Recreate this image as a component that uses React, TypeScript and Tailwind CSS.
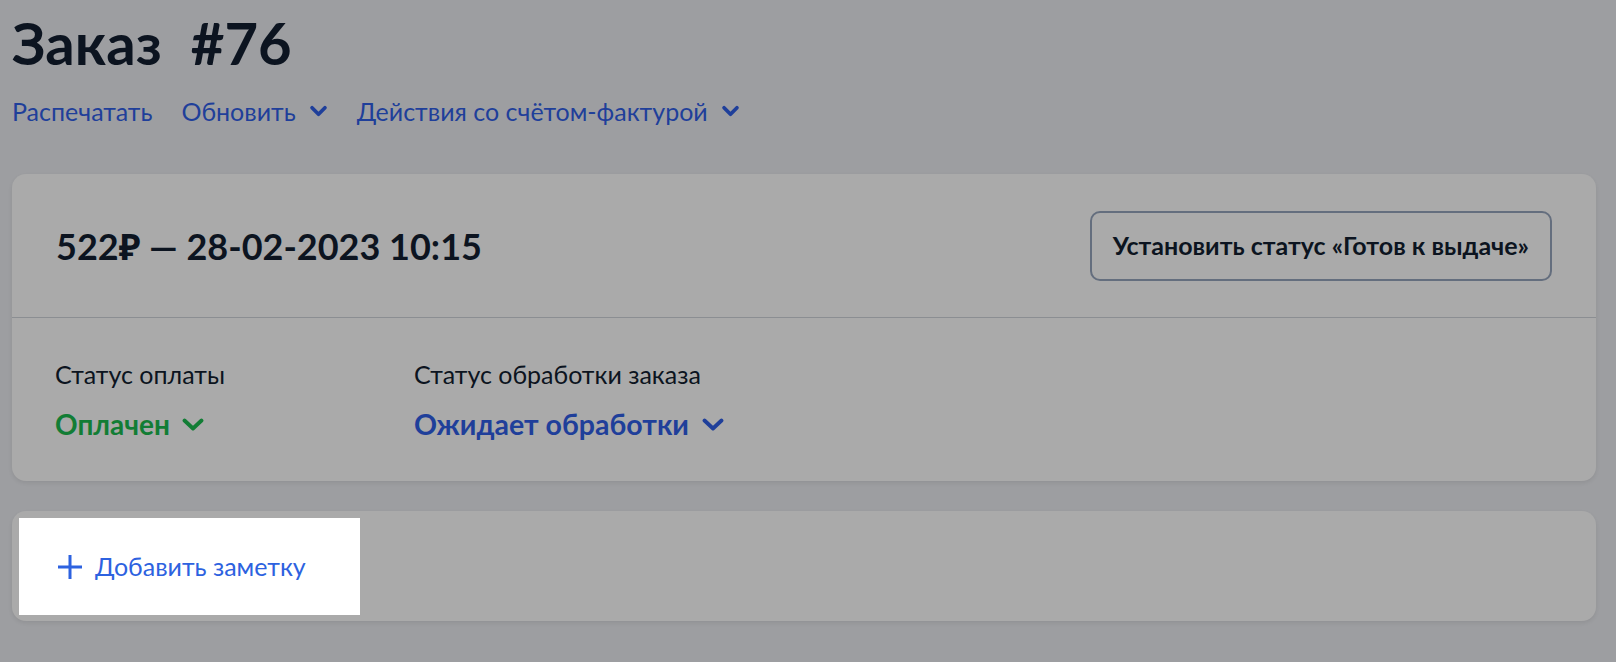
import React from "react";

function Chevron({ className, sw = 4 }: { className?: string; sw?: number }) {
  return (
    <svg viewBox="0 0 20 13" className={className} fill="none" stroke="currentColor" strokeWidth={sw} strokeLinecap="round" strokeLinejoin="round">
      <path d="M3 3 L10 10 L17 3" />
    </svg>
  );
}

function StatusChevron({ className }: { className?: string }) {
  return (
    <svg viewBox="0 0 22 13" className={className} fill="none" stroke="currentColor" strokeWidth={3.8} strokeLinecap="round" strokeLinejoin="round">
      <path d="M2.5 2.5 L11 10.5 L19.5 2.5" />
    </svg>
  );
}

export default function App() {
  return (
    <div className="min-h-screen w-full bg-[#9d9ea1] text-[#0c1420]" style={{ fontFamily: "Lato, 'Noto Sans', sans-serif" }}>
      <div className="pt-[14px] pl-3 pr-5">
        <h1 className="flex gap-[29px] text-[58px] leading-[58px] font-bold text-[#0c1420]">
          <span>Заказ</span>
          <span>#76</span>
        </h1>
        <div className="mt-[25px] flex items-center gap-[29px] text-[25px] leading-[28px] text-[#1f3f9a]">
          <span>Распечатать</span>
          <span className="flex items-center gap-[13px]">
            Обновить
            <Chevron className="w-[19px] h-[12px]" />
          </span>
          <span className="flex items-center gap-[13px]">
            Действия со счётом-фактурой
            <Chevron className="w-[19px] h-[12px]" />
          </span>
        </div>

        <div className="mt-[49px] rounded-[14px] bg-[#aaaaaa] shadow-[0_2px_4px_rgba(0,0,0,0.08)]">
          <div className="flex h-[144px] items-center justify-between px-[44px] border-b border-[#8b8e92]">
            <div className="text-[36px] leading-[40px] font-bold text-[#0c1420]">522₽ — 28-02-2023 10:15</div>
            <button className="h-[70px] rounded-[10px] border-2 border-[#646e7e] px-[21px] text-[25px] font-bold text-[#0c1420]">
              Установить статус «Готов к выдаче»
            </button>
          </div>
          <div className="flex px-[43px] pt-[40px] pb-[39px]">
            <div className="w-[359px]">
              <div className="text-[25px] leading-[32px] text-[#0c1420]">Статус оплаты</div>
              <div className="mt-4 flex items-center gap-[12px] text-[28px] leading-[36px] font-bold text-[#127d35]">
                Оплачен
                <StatusChevron className="w-[22px] h-[13px]" />
              </div>
            </div>
            <div>
              <div className="text-[25px] leading-[32px] text-[#0c1420]">Статус обработки заказа</div>
              <div className="mt-4 flex items-center gap-[13px] text-[28.5px] leading-[36px] font-bold text-[#1f3f9a]">
                Ожидает обработки
                <StatusChevron className="w-[22px] h-[13px]" />
              </div>
            </div>
          </div>
        </div>

        <div className="mt-[30px] h-[110px] rounded-[14px] bg-[#aaaaaa] pt-[7px] pl-[7px] shadow-[0_2px_4px_rgba(0,0,0,0.08)]">
          <div className="flex h-[97px] w-[341px] items-center gap-[12px] bg-white pl-[38px] text-[25px] text-[#2d62e0]">
            <svg viewBox="0 0 26 26" className="w-[26px] h-[26px]" fill="none" stroke="currentColor" strokeWidth={3}>
              <path d="M13 1 V25 M1 13 H25" />
            </svg>
            <span>Добавить заметку</span>
          </div>
        </div>
      </div>
    </div>
  );
}
